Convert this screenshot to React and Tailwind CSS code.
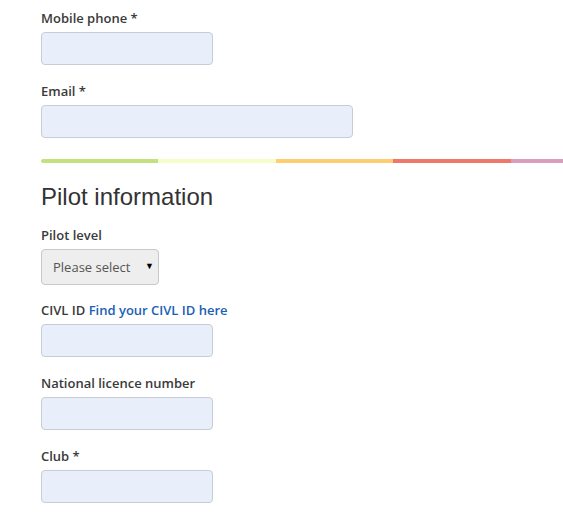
import React from 'react';

const levelColors = ['bg-[#c4e17f]', 'bg-[#f7fdca]', 'bg-[#fecf71]', 'bg-[#f0776c]', 'bg-[#db9dbe]'];

const Field = ({ label, required, wide, children }) => {
  return (
    <div className="mb-[17px]">
      <label className="block h-[18px] leading-[18px] mb-[5px] text-[13px] font-semibold text-[#3a3a3a]">
        {label}{required && ' *'}{children}
      </label>
      <input
        type="text"
        className={`block h-[33px] ${wide ? 'w-[312px]' : 'w-[172px]'} rounded-[4px] border border-[#c8ccd4] bg-[#e8eefa] px-2 text-[13px]`}
      />
    </div>
  );
};

const App = () => {
  return (
    <div className="w-[563px] overflow-hidden bg-white pt-[9px] pl-[41px] text-[#333]" style={{ fontFamily: '"Open Sans", sans-serif' }}>
      <Field label="Mobile phone" required />
      <Field label="Email" required wide />

      {/* level colour bar */}
      <div className="mt-[21px] flex w-[587px] h-[4px]">
        {levelColors.map((c, i) => (
          <div key={i} className={`flex-1 ${c} ${i === 0 ? 'rounded-l-[2px]' : ''}`} />
        ))}
      </div>

      <h2 className="mt-[20px] mb-[15px] text-[24px] leading-[28px] text-[#333]" style={{ fontFamily: '"Liberation Sans", Arial, sans-serif' }}>
        Pilot information
      </h2>

      <div className="mb-[16px]">
        <label className="block h-[18px] leading-[18px] mb-[5px] text-[13px] font-semibold text-[#3a3a3a]">Pilot level</label>
        <div className="relative w-[118px] h-[36px] rounded-[4px] border border-[#c8c8c8] bg-[#eeeeee]">
          <span className="absolute left-[11px] top-[8px] text-[13px] text-[#555]">Please select</span>
          <span className="absolute right-[4px] top-[9px] text-[9px] text-black">▼</span>
        </div>
      </div>

      <Field label="CIVL ID">
        {' '}<a href="#" className="text-[#1a5fb4]">Find your CIVL ID here</a>
      </Field>
      <Field label="National licence number" />
      <Field label="Club" required />
    </div>
  );
};

export default App;
